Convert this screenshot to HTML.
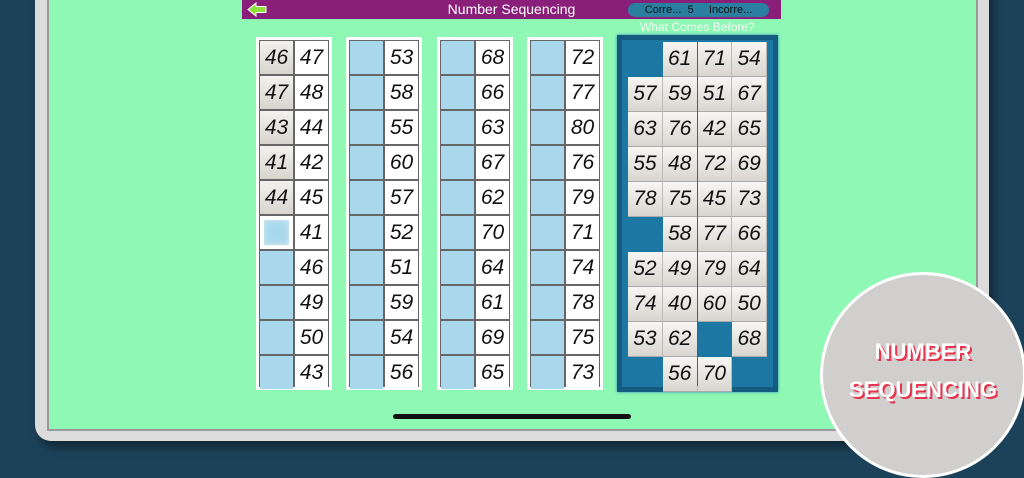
<!DOCTYPE html>
<html><head><meta charset="utf-8"><style>
*{margin:0;padding:0;box-sizing:border-box}
body{width:1024px;height:473px;overflow:hidden;background:#1c425a;position:relative;font-family:"Liberation Sans",sans-serif}
.frame{position:absolute;left:35px;top:-30px;width:954px;height:471px;background:#dcdcdc;border-radius:16px;box-shadow:4px 6px 10px rgba(0,0,0,.45)}
.green{position:absolute;left:47px;top:0;width:931px;height:431px;background:#8ff8b4;border:2px solid #999;border-top:none}
.bar{position:absolute;left:242px;top:0;width:539px;height:19px;background:#8a1f7a;color:#fff;font-size:14px;text-align:center;line-height:19px}
.pill{position:absolute;left:386px;top:3px;width:141px;height:14px;background:#2a7fa0;border-radius:7px;color:#111;font-size:11px;line-height:14px}
.wcb{position:absolute;left:640px;top:20px;color:#fff;font-size:12px;opacity:.9}
.col{position:absolute;top:37px;width:76px;height:353px;background:#fff;padding:3px}
.g{display:grid;grid-template-columns:1fr 1fr;grid-template-rows:repeat(10,1fr);gap:2px;background:#666;border:1px solid #666;width:100%;height:100%}
.g div{background:#fff;font-style:italic;font-size:21px;text-align:center;line-height:33px;color:#111}
.g .b{background:#a9d8ec}
.g .t{background:linear-gradient(#f2f1ee,#d8d5cf)}
.g .s{box-shadow:inset 0 0 0 4px #fff,inset 0 0 6px 5px #cde6f2;background:#a9d8ec}
.panel{position:absolute;left:617px;top:35px;width:161px;height:357px;background:#1d77a3;border:5px solid #145b80;box-shadow:0 0 3px #2a8fbf}
.pg{position:absolute;left:6px;top:2px;width:139px;height:344px;display:grid;grid-template-columns:repeat(4,1fr);grid-template-rows:repeat(10,1fr)}
.pg div{font-style:italic;font-size:21px;text-align:center;line-height:34px;color:#111}
.pg .t{background:linear-gradient(#f7f6f3,#d9d6d0);border-right:1px solid #bbb;border-bottom:1px solid #aaa}
.vl{position:absolute;left:75px;top:2px;width:1px;height:344px;background:#1d6f99}
.home{position:absolute;left:393px;top:414px;width:238px;height:5px;background:#111;border-radius:3px}
.circ{position:absolute;left:820px;top:272px;width:206px;height:206px;border-radius:50%;background:#d0cfcd;border:3px solid #fff;text-align:center;color:#fff;font-weight:bold;font-size:22px;letter-spacing:0px;text-shadow:2px 2px 0 #e8344f}
</style></head><body>
<div class="frame"></div>
<div class="green"></div>
<div class="bar">Number Sequencing
<svg style="position:absolute;left:5px;top:2px" width="20" height="15" viewBox="0 0 20 15"><path d="M1 7.5L9 1V4.5H19V10.5H9V14Z" fill="#8fe03a" stroke="#fff" stroke-width="1"/></svg>
<div class="pill">Corre...&nbsp; 5 &nbsp;&nbsp;&nbsp; Incorre...</div></div>
<div class="wcb">What Comes Before?</div>

<div class="col" style="left:256px"><div class="g">
<div class="t">46</div><div>47</div><div class="t">47</div><div>48</div><div class="t">43</div><div>44</div><div class="t">41</div><div>42</div><div class="t">44</div><div>45</div><div class="s"></div><div>41</div><div class="b"></div><div>46</div><div class="b"></div><div>49</div><div class="b"></div><div>50</div><div class="b"></div><div>43</div>
</div></div>
<div class="col" style="left:346px"><div class="g">
<div class="b"></div><div>53</div><div class="b"></div><div>58</div><div class="b"></div><div>55</div><div class="b"></div><div>60</div><div class="b"></div><div>57</div><div class="b"></div><div>52</div><div class="b"></div><div>51</div><div class="b"></div><div>59</div><div class="b"></div><div>54</div><div class="b"></div><div>56</div>
</div></div>
<div class="col" style="left:437px"><div class="g">
<div class="b"></div><div>68</div><div class="b"></div><div>66</div><div class="b"></div><div>63</div><div class="b"></div><div>67</div><div class="b"></div><div>62</div><div class="b"></div><div>70</div><div class="b"></div><div>64</div><div class="b"></div><div>61</div><div class="b"></div><div>69</div><div class="b"></div><div>65</div>
</div></div>
<div class="col" style="left:527px"><div class="g">
<div class="b"></div><div>72</div><div class="b"></div><div>77</div><div class="b"></div><div>80</div><div class="b"></div><div>76</div><div class="b"></div><div>79</div><div class="b"></div><div>71</div><div class="b"></div><div>74</div><div class="b"></div><div>78</div><div class="b"></div><div>75</div><div class="b"></div><div>73</div>
</div></div>

<div class="panel"><div class="pg">
<div></div><div class="t">61</div><div class="t">71</div><div class="t">54</div>
<div class="t">57</div><div class="t">59</div><div class="t">51</div><div class="t">67</div>
<div class="t">63</div><div class="t">76</div><div class="t">42</div><div class="t">65</div>
<div class="t">55</div><div class="t">48</div><div class="t">72</div><div class="t">69</div>
<div class="t">78</div><div class="t">75</div><div class="t">45</div><div class="t">73</div>
<div></div><div class="t">58</div><div class="t">77</div><div class="t">66</div>
<div class="t">52</div><div class="t">49</div><div class="t">79</div><div class="t">64</div>
<div class="t">74</div><div class="t">40</div><div class="t">60</div><div class="t">50</div>
<div class="t">53</div><div class="t">62</div><div></div><div class="t">68</div>
<div></div><div class="t">56</div><div class="t">70</div><div></div>
</div><div class="vl"></div></div>

<div class="home"></div>
<div class="circ"><div style="margin-top:64px">NUMBER</div><div style="margin-top:12px">SEQUENCING</div></div>
</body></html>
